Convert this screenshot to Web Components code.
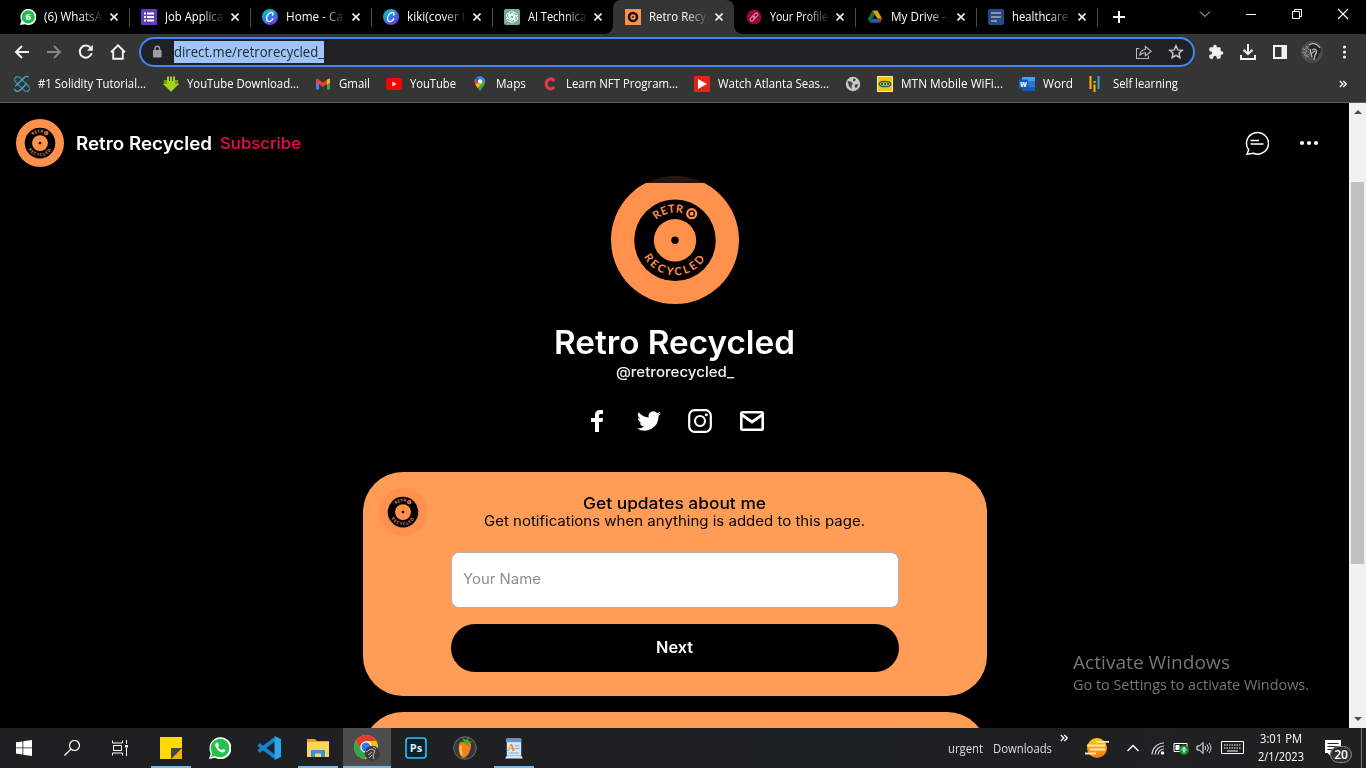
<!DOCTYPE html>
<html lang="en">
<head>
<meta charset="utf-8">
<title>Retro Recycled</title>
<style>
html,body{margin:0;height:100%;overflow:hidden;background:#000}
body{font-family:"Open Sans","Noto Sans",sans-serif;font-size:12px;color:#fff}
</style>
</head>
<body>
<desktop-screen></desktop-screen>
<script>
const ICONS = {
  back:['0 0 16 16','<path d="M15 8H2M8 2L2 8l6 6" fill="none" stroke="#f1f1f1" stroke-width="2"/>'],
  forward:['0 0 16 16','<path d="M1 8h13M8 2l6 6-6 6" fill="none" stroke="#858585" stroke-width="1.8"/>'],
  reload:['0 0 16 16','<path d="M13.6 9.2A6 6 0 1 1 12.6 4" fill="none" stroke="#f1f1f1" stroke-width="2"/><path d="M14.8.8v6H8.9z" fill="#f1f1f1"/>'],
  home:['0 0 16 16','<path d="M1 8.2L8 1.3l7 6.9M3.2 7v7.7h9.6V7" fill="none" stroke="#f1f1f1" stroke-width="1.9"/>'],
  lock:['0 0 12 14','<rect x="2" y="5" width="8.6" height="7.6" rx="1" fill="#9aa0a6"/><path d="M4 5V3.6a2.3 2.3 0 0 1 4.6 0V5" fill="none" stroke="#9aa0a6" stroke-width="1.4"/>'],
  share:['0 0 16 16','<path d="M3.500 4.500h-3v10h12v-3" fill="none" stroke="#b5b7ba" stroke-width="1.1"/><path d="M3.700 11.500c.4-3.800 2.100-5.700 5.700-6V2.500l5.800 4.700-5.800 4.600V8.700c-2.500 0-4.200.6-5.700 2.800z" fill="none" stroke="#b5b7ba" stroke-width="1.100"/>'],
  star:['0 0 16 16','<path d="M8 1.800l1.800 4.100 4.500.4-3.400 3 1 4.400L8 11.400l-3.900 2.300 1-4.400-3.400-3 4.500-.4z" fill="none" stroke="#c5c7ca" stroke-width="1.500"/>'],
  puzzle:['0 0 24 24','<path fill="#f1f1f1" d="M20.500 11H19V7a2 2 0 0 0-2-2h-4V3.500a2.500 2.500 0 0 0-5 0V5H4a2 2 0 0 0-2 2v3.800h1.500a2.700 2.700 0 0 1 0 5.400H2V20c0 1.100.9 2 2 2h3.800v-1.500a2.700 2.700 0 0 1 5.400 0V22H17a2 2 0 0 0 2-2v-4h1.500a2.500 2.500 0 0 0 0-5z"/>'],
  download:['0 0 16 16','<path d="M8 0v10M3.500 5.700L8 10.200l4.500-4.500M1 11v4h14v-4" fill="none" stroke="#f1f1f1" stroke-width="2"/>'],
  panel:['0 0 16 16','<path d="M2 2h12v12H2z" fill="none" stroke="#f1f1f1" stroke-width="2"/><path d="M9.500 2H14v12H9.500z" fill="#f1f1f1"/>'],
  user:['0 0 22 22','<circle cx="11" cy="11" r="11" fill="#4b4b4b"/><path d="M1 7l5 3-3 5M3 13l5 3M2 10l6-5M4 17l6-6M1 12l4-1M5 5l3 4" stroke="#8f8f8f" fill="none"/><path d="M8 6c3-5 10-5 12 2 0 5-3 5-4 9l-3 3c-1-5-4-7-5-14z" fill="#252525"/><path d="M8 4c4-3 9-1 11 3M11 9c4-3 6 2 3 5l-1 5M11 12l3-2M9 8l2 8" fill="none" stroke="#b8b8b8" stroke-width="1.300"/>'],
  kebab:['0 0 16 16','<g fill="#f1f1f1"><circle cx="8.500" cy="3" r="1.600"/><circle cx="8.500" cy="8" r="1.600"/><circle cx="8.500" cy="13" r="1.600"/></g>'],
  close:['0 0 8 8','<path d="M.5.5l7 7M7.500.5l-7 7" stroke="#f1f1f1" stroke-width="1.600"/>'],
  plus:['0 0 12 12','<path d="M6 0v12M0 6h12" stroke="#fff" stroke-width="2"/>'],
  wchev:['0 0 12 12','<path d="M1 3.500l5 5 5-5" fill="none" stroke="#ddd"/>'],
  wmin:['0 0 12 12','<path d="M1 6.500h10" stroke="#fff"/>'],
  wmax:['0 0 12 12','<path d="M1.500 3.500h7v7h-7zM3.500 3V1.500h7v7H9" fill="none" stroke="#fff"/>'],
  wclose:['0 0 12 12','<path d="M1 1l10 10M11 1L1 11" stroke="#fff" stroke-width="1.100"/>'],
  wa6:['0 0 16 16','<path d="M0 16l1.400-4.200A8 8 0 1 1 5 15.200z" fill="#fff"/><circle cx="8.200" cy="7.900" r="6.600" fill="#1fbf4b"/><text x="8.200" y="11.400" font-family="Open Sans" font-weight="700" font-size="9.500" fill="#fff" text-anchor="middle">6</text>'],
  forms:['0 0 16 16','<rect width="16" height="16" rx="1" fill="#673ab7"/><path d="M3 4.500h2M3 8h2M3 11.500h2M6 4.500h7M6 8h7M6 11.500h7" stroke="#fff" stroke-width="1.800"/>'],
  canva:['0 0 16 16','<defs><linearGradient id="a" x1=".2" y1="0" x2=".75" y2="1"><stop offset="0" stop-color="#09c2cf"/><stop offset=".5" stop-color="#2f7fe0"/><stop offset="1" stop-color="#7d2ae8"/></linearGradient></defs><circle cx="8" cy="8" r="8" fill="url(#a)"/><path d="M10.200 6.500c1.300-1 1.200-3.300-.6-3.200C6.500 3.600 4.200 7.200 4.600 10.200c.5 3.500 4.600 3.200 6.500-.8" fill="none" stroke="#fff" stroke-width="1.300"/>'],
  gpt:['0 0 16 16','<rect width="16" height="16" rx="2" fill="#74aa9c"/><g fill="none" stroke="#fff" stroke-width=".85"><path id="p" d="M5.300 9.300V4.600a2.500 2.500 0 0 1 4.600-1.300L6.400 5.500v3.600"/><use href="#p" transform="rotate(60 8 8)"/><use href="#p" transform="rotate(120 8 8)"/><use href="#p" transform="rotate(180 8 8)"/><use href="#p" transform="rotate(240 8 8)"/><use href="#p" transform="rotate(300 8 8)"/></g>'],
  retro:['0 0 16 16','<path fill="#ff914d" d="M0 0h16v16H0z"/><circle cx="8" cy="8" r="4" fill="none" stroke="#15100d" stroke-width="2.600"/><circle cx="8" cy="8" r=".9" fill="#15100d"/>'],
  link:['0 0 16 16','<circle cx="8" cy="8" r="7.300" fill="#a10537"/><g fill="none" stroke="#cf95a8" stroke-width="1" transform="rotate(-45 8 8)"><rect x="3" y="6.400" width="5.800" height="3.200" rx="1.600"/><rect x="7.200" y="6.400" width="5.800" height="3.200" rx="1.600"/></g>'],
  drive:['0 0 16 16','<path fill="#11733a" d="M5.500 1.500L.8 9.700l2.300 4L8 5.500z"/><path fill="#d7a210" d="M5.500 1.500h5l4.700 8.200h-4.800z"/><path fill="#2858b8" d="M5.400 9.700h9.800l-2.400 4H3.100z"/><path fill="#a5322b" d="M10.500 9.700h4.700l-2.400 4z"/>'],
  docs:['0 0 16 16','<rect width="16" height="16" rx="2" fill="#25498d"/><path d="M3 4h10M3 8h10M3 12h6" stroke="#8994a8" stroke-width="1.800"/>'],
  solidity:['0 0 16 16','<g fill="none" stroke-width="1.300"><rect x="-1.300" y="5" width="18.600" height="6" rx="3" transform="rotate(45 8 8)" stroke="#2790a5"/><rect x="-1.300" y="5" width="18.600" height="6" rx="3" transform="rotate(-45 8 8)" stroke="#54a9b8" stroke-dasharray="17 7"/></g>'],
  ytd:['0 0 16 16','<path d="M1 4h3v5H.5zM12 4h3l.5 5H12z" fill="#6da012"/><path d="M4 .5h2v5H4zM7 .5h2v5H7zM10 .5h2v5h-2zM4 5h8v3h4l-8 7.700L0 8h4z" fill="#a3d81a"/>'],
  gmail:['0 0 16 16','<path fill="#4285f4" d="M1 4v9.500h3V7z"/><path fill="#34a853" d="M12 7v6.500h3V4z"/><path fill="#fbbc04" d="M12 3.500l3-1V6l-3 3z"/><path fill="#ea4335" d="M1 3l1.500-.5L8 6.700l4-3V8L8 11 1 6z"/>'],
  yt:['0 0 16 16','<rect y="2" width="16" height="12" rx="3" fill="#f00"/><path d="M6.400 5.600l4 2.400-4 2.400z" fill="#fff"/>'],
  maps:['0 0 16 16','<path fill="#34a853" d="M8 16C7 12 2.700 9.700 2.700 5.500L13.300 5C13.500 10 9 12 8 16z"/><path fill="#fbbc04" d="M3.300 8.300L9.500 2l2 4-6 6z"/><path fill="#ea4335" d="M3 3l5 3-4.800 2.500A5.600 5.600 0 0 1 3 3z"/><path fill="#4285f4" d="M4 2.200a5.300 5.300 0 0 1 9.200 2.400L7 8z"/><path fill="#1a73e8" d="M3.300 3L5 1l3 3-2.500 2z"/><circle cx="8" cy="5.300" r="2" fill="#fff"/>'],
  cc:['0 0 16 16','<path d="M12.300 5.100C9.500.5 3.700 4 4.200 8.600c.4 4.400 5.300 5.700 8.100 2.400" fill="none" stroke="#e03a3e" stroke-width="3"/>'],
  play:['0 0 16 16','<rect width="16" height="16" rx="1.500" fill="#e62219"/><path d="M4 3l9 5-9 5z" fill="#fff"/>'],
  globe:['0 0 16 16','<circle cx="8" cy="8" r="7.200" fill="#c7cace"/><path d="M2.500 5l3.500.5 2 2-1.500 2.500.5 3-3-2.500zM8 2.500l3 .5-1 2-2 .5zM10 8.500l3.500-.5-2 4-2-1z" fill="#47494c"/>'],
  mtn:['0 0 16 16','<path fill="#ffc400" stroke="#fff0a6" d="M.5.5h15v15H.5z"/><ellipse cx="8" cy="8" rx="5.800" ry="2.600" fill="none" stroke="#10697e" stroke-width="1.500"/><path d="M4 8h2M7 8h2M10 8h2" stroke="#126a81" stroke-width="1.800"/>'],
  word:['0 0 16 16','<path fill="#2b78d3" d="M3 1h13v14H3z"/><path fill="#41a5ee" d="M3 1h13v4H3z"/><path fill="#185abd" d="M3 11h13v4H3zM0 3.500h9v9H0z"/><text x="4.500" y="11" text-anchor="middle" font-family="Open Sans" font-weight="700" font-size="8" fill="#fff">w</text>'],
  self:['0 0 16 16','<path d="M1.500 0v13" stroke="#ffb400" stroke-width="2"/><path d="M5.500 5v2M5.500 8.500V16" stroke="#ffb400" stroke-width="2"/><path d="M9.500 0v13" stroke="#36a4dc" stroke-width="2"/>'],
  chat:['0 0 24 24','<path d="M2 23.200l1.700-4.400A11 10.800 0 1 1 8.300 22.300z" fill="none" stroke="#fff" stroke-width="1.500"/><path d="M5.500 9.500H14M5.500 13H18.500" stroke="#fff" stroke-width="1.500"/>'],
  dots:['0 0 24 24','<g fill="#fff"><circle cx="5" cy="12" r="2.100"/><circle cx="12" cy="12" r="2.100"/><circle cx="19" cy="12" r="2.100"/></g>'],
  facebook:['0 0 24 24','<path fill="#fff" d="M10 23V13H6V9h4V6c0-3.400 2-5 4.700-5H18v4h-2.300C14.400 5 14 5.600 14 6.700V9h4l-.5 4H14v10z"/>'],
  twitter:['0 0 24 24','<path fill="#fff" d="M23.900 4.600a10 10 0 0 1-2.800.8 5 5 0 0 0 2.200-2.700 10 10 0 0 1-3.200 1.200 4.900 4.900 0 0 0-8.400 4.500A14 14 0 0 1 1.700 3.200a4.900 4.900 0 0 0 1.500 6.500 5 5 0 0 1-2.200-.6v.1c0 2.300 1.600 4.300 3.900 4.800a5 5 0 0 1-2.200.1 4.900 4.900 0 0 0 4.600 3.400A9.900 9.900 0 0 1 0 19.500a14 14 0 0 0 21.500-12.400 10 10 0 0 0 2.400-2.500z"/>'],
  instagram:['0 0 24 24','<rect x="1.200" y="1.200" width="21.600" height="21.600" rx="5.500" fill="none" stroke="#fff" stroke-width="2.200"/><circle cx="12" cy="12" r="5" fill="none" stroke="#fff" stroke-width="2.200"/><circle cx="18.300" cy="5.700" r="1.500" fill="#fff"/>'],
  mail:['0 0 24 24','<rect x="1.300" y="3.300" width="21.400" height="17.400" rx="1" fill="none" stroke="#fff" stroke-width="2.600"/><path d="M2 6l10 7 10-7" fill="none" stroke="#fff" stroke-width="2.800"/>'],
  win:['0 0 16 16','<path fill="#fff" d="M0 2.300l6.500-.9v6.100H0zM7.300 1.300L16 0v7.500H7.300zM0 8.300h6.500v6.200L0 13.600zM7.300 8.300H16V16l-8.700-1.300z"/>'],
  search:['0 0 16 16','<circle cx="10.500" cy="5.500" r="5" fill="none" stroke="#fff" stroke-width="1.200"/><path d="M7 9L.5 15.500" stroke="#fff" stroke-width="1.300"/>'],
  task:['0 0 16 16','<path d="M.5.5V3h10V.5M.5 15.500V13h10v2.500M1.500 5.500h8v5h-8zM14.500 0v4M14.500 8v8" fill="none" stroke="#fff"/><path fill="#fff" d="M13 5h3v2.500h-3z"/>'],
  sticky:['0 0 22 22','<path fill="#ffd800" d="M0 0h22v11L11 22H0z"/><path fill="#f4b400" d="M11 22h11V11z"/><path fill="#444" d="M11 11h11L11 22z"/>'],
  whatsapp:['0 0 22 22','<path d="M0 22l1.700-5.800A11 11 0 1 1 6 20.700z" fill="#fff"/><path d="M2 20l1.200-4A9.300 9.300 0 1 1 6.300 19z" fill="#25c24b"/><path d="M7.500 5.500c-2 1.200-1.600 4 .8 6.700 2.800 3.200 6.100 4.300 7.700 2.100.4-.7.300-1.100 0-1.300l-2-1.100c-.5-.2-.9.9-1.500 1.200-1-.1-3.200-2-3.500-3.200.5-.6 1.200-1 .9-1.600L9 5.900c-.3-.6-1-.6-1.500-.4z" fill="#fff"/>'],
  vscode:['0 0 24 24','<path d="M1.500 8.500L18 21M1.500 15.500L18 3" stroke="#1684d1" stroke-width="3.600"/><path fill="#28a6f2" d="M17.500 0L24 3v18l-6.500 3z"/>'],
  folder:['0 0 22 20','<path fill="#e9a500" d="M0 1h8l2 2h12v5H0z"/><path fill="#ffd45c" d="M0 4h22v15H0z"/><path fill="#3b93d7" d="M4 12h14v7h-4v-3.500H8V19H4z"/>'],
  chrome:['0 0 26 26','<circle cx="12" cy="12" r="12" fill="#fbc116"/><path fill="#e33b2e" d="M1.600 6A12 12 0 0 1 22.400 6H12L7 15z"/><path fill="#2da94f" d="M1.600 6l5.500 9 5 3L11 24A12 12 0 0 1 1.600 6z"/><circle cx="12" cy="12" r="5.700" fill="#fff"/><circle cx="12" cy="12" r="4.500" fill="#3479e8"/><circle cx="18.300" cy="18.300" r="7.600" fill="#3b3b3b"/><path d="M12 17l5-3 4 2-2 4 1 4M14 20l4-3M22 14l-3-2M15 23l3-3" fill="none" stroke="#b9b9b9"/>'],
  ps:['0 0 22 22','<rect x="1" y="1" width="20" height="20" rx="3" fill="#06202d" stroke="#29c5f6" stroke-width="1.600"/><text x="11" y="15" text-anchor="middle" font-family="Open Sans" font-weight="700" font-size="11" fill="#d8f4ff">Ps</text>'],
  fl:['0 0 24 24','<circle cx="12" cy="12" r="11.300" fill="#35383b" stroke="#6a6e70"/><path d="M6 8c2-3 9-3 12 0 0 5-2 13-8 14C6 20 5 13 6 8z" fill="#f68119"/><path d="M8 10c-1 4 0 7 1 9" stroke="#ffc15b" stroke-width="2" fill="none"/><path d="M12 8L6 6l5-.5L9 2l4 2 3-3-1 4 5 1-5 1 2 4z" fill="#54a827"/>'],
  wordpad:['0 0 20 22','<path fill="#d5e9f7" d="M2 0h16v19l2 3H0l2-3z"/><path fill="#6596c7" d="M1 0h17v4H1z"/><text x="7" y="14" text-anchor="middle" font-family="Liberation Serif" font-weight="700" font-size="12" fill="#ef8425">A</text><path d="M11 8h5M11 11h5M4 16h12" stroke="#7ea5cf"/><path d="M2 19h16" stroke="#9fb2c0"/>'],
  weather:['0 0 24 22','<defs><linearGradient id="w" x1="0" y1="0" x2="0" y2="1"><stop stop-color="#ffcb10"/><stop offset="1" stop-color="#f47a12"/></linearGradient></defs><circle cx="12" cy="11" r="10" fill="url(#w)"/><path d="M11 4.800h13M2 8.500h18M5 12.500h15M0 16.500h11" stroke="#ffe2ad" stroke-width="1.800"/>'],
  up:['0 0 14 14','<path d="M1.500 10L7 4.500l5.500 5.500" fill="none" stroke="#fff" stroke-width="1.300"/>'],
  wifi:['0 0 14 14','<g fill="none" stroke="#ddd" stroke-width="1.200"><path d="M1 13.500A12 12 0 0 1 13 2M4 13.500A9 9 0 0 1 13 5M7 13.500A6 6 0 0 1 13 8"/></g><circle cx="11.500" cy="12" r="1.700" fill="#fff"/>'],
  battery:['0 0 16 14','<path d="M1 2.500h13v8H1z" fill="none" stroke="#fff"/><path fill="#fff" d="M2.500 4h4v5h-4z"/><circle cx="11" cy="9" r="4.800" fill="#149633"/><path d="M11 6v6M9 8.500l2-2 2 2-2 2z" stroke="#fff" fill="none"/>'],
  sound:['0 0 17 14','<path d="M1 5h2.500L7 1.500v11L3.500 9H1z" fill="none" stroke="#fff"/><path d="M9 5q1.500 2 0 4M11 3.500q3 3.500 0 7M13 2q4 5 0 10" fill="none" stroke="#ddd"/>'],
  keyboard:['0 0 23 14','<path d="M.5.500h22v12H.5z" fill="none" stroke="#fff"/><path d="M3 4h17M3 7h17" stroke="#fff" stroke-width="1.200" stroke-dasharray="1.500 1"/><path d="M6 10h11" stroke="#fff"/>'],
  note:['0 0 16 16','<path fill="#fff" d="M0 0h16v13H5.500V16l-3-3H0z"/><path d="M2.500 3.500h11M2.500 6.500h11M2.500 9.500h8" stroke="#222"/>'],
  more:['0 0 8 8','<path d="M.8 1l3 3-3 3M4.300 1l3 3-3 3" fill="none" stroke="#fff" stroke-width="1.300"/>']
};
const component = (tag, render) => customElements.define(tag, class extends HTMLElement {
  connectedCallback() {
    if (this.shadowRoot) return;
    this.attachShadow({mode:'open'}).innerHTML = render(this);
  }
});
const icon = (name, w=16, h=w) => `<ui-icon name="${name}" w="${w}" h="${h}"></ui-icon>`;
const text = (s, w) => `<fit-text w="${w}">${s}</fit-text>`;

component('desktop-screen', () => `<style>
:host{display:flex;flex-direction:column;width:1366px;height:768px;overflow:hidden;background:#000;position:relative}
profile-page{flex:1;min-height:0}
</style><browser-tabs></browser-tabs><browser-toolbar></browser-toolbar><bookmark-bar></bookmark-bar><profile-page></profile-page><task-bar></task-bar><activation-note></activation-note>`);

component('browser-tabs', () => `<style>
:host{display:flex;height:34px;box-sizing:border-box;padding-left:8px;background:#000}
.new{width:44px;display:grid;place-items:center}
.controls{margin-left:auto;display:grid;grid-template-columns:repeat(4,46px);height:28px;place-items:center}
</style>
${[['wa6','(6) WhatsA',58],['forms','Job Applica',58],['canva','Home - Ca',57],['canva','kiki(cover t',59],['gpt','AI Technica',58],['retro','Retro Recy',57],['link','Your Profile',58],['drive','My Drive -',55],['docs','healthcare',56]]
 .map(([i,t,w],n)=>`<browser-tab icon="${i}" w="${w}" ${n==5?'active':''} ${n==4||n==5?'plain':''}>${t}</browser-tab>`).join('')}
<div class="new">${icon('plus',12)}</div><div class="controls">${['wchev','wmin','wmax','wclose'].map(i=>icon(i,12)).join('')}</div>`);

component('browser-tab', el => `<style>
:host{display:flex;align-items:center;width:121px;height:34px;box-sizing:border-box;padding-left:12px;position:relative}
:host([active]){background:#353535;border-radius:8px 8px 0 0}
:host([active])::before,:host([active])::after{content:"";position:absolute;bottom:0;width:8px;height:8px}
:host([active])::before{left:-8px;background:radial-gradient(circle at 0 0,transparent 7.5px,#353535 8px)}
:host([active])::after{right:-8px;background:radial-gradient(circle at 100% 0,transparent 7.5px,#353535 8px)}
:host(:not([plain]))::after{content:"";position:absolute;left:121px;top:8px;width:1px;height:19px;background:#4a4a4a}
.name{margin:0 8px 0 8px;width:58px;overflow:hidden;line-height:20px;-webkit-mask:linear-gradient(90deg,#000 62%,transparent 104%);mask:linear-gradient(90deg,#000 62%,transparent 104%)}
</style>${icon(el.getAttribute('icon'))}<div class="name">${text(el.textContent,el.getAttribute('w'))}</div>${icon('close',8)}`);

component('browser-toolbar', () => `<style>
:host{display:flex;align-items:center;height:36px;background:#353535;padding-left:14px;gap:16px;box-sizing:border-box}
.box{display:flex;align-items:center;box-sizing:border-box;width:1056px;height:30px;margin:0 -3px;border:2px solid #4285f4;border-radius:15px;background:#202124;padding:0 9px 0 10px}
.url{margin-left:11px;background:#9fc5f8;height:22px;line-height:21px;color:#25282c;font-size:14px}
.end{margin-left:auto;display:flex;gap:16px}
.user{margin:0 -3px}
</style>${icon('back')}${icon('forward')}${icon('reload')}${icon('home')}
<div class="box">${icon('lock',12,14)}<div class="url">${text('direct.me/retrorecycled_',150)}</div><div class="end">${icon('share')}${icon('star')}</div></div>
${icon('puzzle')}${icon('download')}${icon('panel')}<span class="user">${icon('user',22)}</span>${icon('kebab')}`);

component('bookmark-bar', () => `<style>
:host{display:flex;align-items:center;gap:16px;height:33px;padding:0 19px 5px 14px;box-sizing:border-box;background:#353535;border-bottom:1px solid #5c5c5c}
div{display:flex;gap:8px;align-items:center;height:20px}
.more{margin-left:auto}
</style>${[['solidity','#1 Solidity Tutorial...',108],['ytd','YouTube Download...',112],['gmail','Gmail',31],['yt','YouTube',46],['maps','Maps',30],['cc','Learn NFT Program...',112],['play','Watch Atlanta Seas...',111],['globe'],['mtn','MTN Mobile WiFi...',102],['word','Word',30],['self','Self learning',65]].map(([i,t,w],n)=>`<div ${n?'':'style="width:133px"'}>${icon(i)}${t?text(t,w):''}</div>`).join('')}<div class="more">${icon('more',8)}</div>`);

component('profile-page', () => `<style>
:host{display:flex;background:#000;overflow:hidden;font-family:Inter,sans-serif}
.page{width:1349px;display:flex;flex-direction:column;align-items:center}
header{align-self:stretch;flex:none;height:80px;box-sizing:border-box;padding:0 28px 0 16px;display:flex;align-items:center;background:rgba(0,0,0,.85);position:relative;z-index:1}
.name{font-size:18px;font-weight:600;margin:0 8px 0 12px}
.sub{font-size:16px;font-weight:500;color:#f4074e}
.actions{margin-left:auto;display:flex;gap:28px}
.avatar{margin-top:-7px;flex:none}
h1{font-size:32px;font-weight:600;line-height:40px;margin:19px 0 0;height:40px;flex:none}
.handle{font-size:14px;font-weight:500;line-height:18px;color:#eee;flex:none}
.social{display:flex;gap:27.700px;margin:28px 0 39px;flex:none}
.next-card{flex:none;width:624px;height:224px;border-radius:40px;background:#ff9d57;margin-top:16px}
.scroll{width:17px;background:#f1f1f1;display:flex;flex-direction:column;align-items:center}
i{width:0;height:0;border:4px solid transparent}
.up{border-bottom-color:#505050;border-top:0;margin:7px 0 68px}
.thumb{width:13px;height:382px;background:#c1c1c1}
.down{border-top-color:#505050;border-bottom:0;margin:auto 0 7px}
</style>
<div class="page"><header><record-logo size="48"></record-logo><div class="name">${text('Retro Recycled',136)}</div><div class="sub">${text('Subscribe',81)}</div><div class="actions">${icon('chat',24)}${icon('dots',24)}</div></header>
<record-logo class="avatar" size="128"></record-logo>
<h1>${text('Retro Recycled',241)}</h1><div class="handle">${text('@retrorecycled_',118)}</div>
<div class="social">${['facebook','twitter','instagram','mail'].map(i=>icon(i,24)).join('')}</div>
<updates-card></updates-card><div class="next-card"></div></div>
<div class="scroll"><i class="up"></i><div class="thumb"></div><i class="down"></i></div>`);

component('record-logo', el => `<style>
:host{display:block;width:${el.getAttribute('size')}px;height:${el.getAttribute('size')}px}svg{display:block;width:100%;height:100%}
text{font-family:Lato,sans-serif;font-weight:700;font-size:11px;fill:#ff914d}
</style><svg viewBox="0 0 128 128"><circle cx="64" cy="64" r="64" fill="#ff914d"/><circle cx="64" cy="64.300" r="40.800" fill="#000"/><circle cx="64" cy="64.300" r="21.200" fill="#ff914d"/><circle cx="64" cy="64.300" r="3.700" fill="#000"/>
<path id="t" d="M45.200 43.800A27.800 27.800 0 0 1 91.800 64.300" fill="none"/><path id="b" d="M33 80.600A35 35 0 0 0 95 80.600" fill="none"/>
<text textLength="28"><textPath href="#t" textLength="28">RETR</textPath></text><text textLength="73.500"><textPath href="#b" textLength="73.500">RECYCLED</textPath></text>
<circle cx="80.700" cy="37.700" r="5.600" fill="#ff914d"/><circle cx="80.700" cy="37.700" r="2.700" fill="none" stroke="#1a0e07" stroke-width="1.400"/></svg>`);

component('updates-card', () => `<style>
:host{display:grid;grid-template-columns:48px 448px 48px;column-gap:24px;box-sizing:border-box;width:624px;height:224px;flex:none;border-radius:40px;background:#ff9d57;padding:16px;color:#000}
.form{display:flex;flex-direction:column;align-items:center;padding-top:6px}
.title{font-size:16px;font-weight:500;line-height:18px}
.note{font-size:14px;line-height:18px}
.field{box-sizing:border-box;width:448px;height:56px;border:1px solid #a8b3bd;border-radius:8px;background:#fff;color:#8d8d8d;font-size:14px;line-height:52px;padding-left:11px;margin:22px 0 16px}
.button{width:448px;height:48px;border-radius:24px;background:#000;color:#fff;font-size:16px;font-weight:600;line-height:47px;display:flex;justify-content:center}
</style><record-logo size="48"></record-logo><div class="form"><div class="title">${text('Get updates about me',183)}</div><div class="note">${text('Get notifications when anything is added to this page.',381)}</div><div class="field">${text('Your Name',78)}</div><div class="button">${text('Next',37)}</div></div>`);

component('task-bar', () => `<style>
:host{display:flex;height:40px;background:linear-gradient(90deg,#202022,#1f2022 35%,#1c2125 60%,#202020)}
.cell{width:48px;height:40px;display:grid;place-items:center;position:relative}
.apps{display:flex;gap:1px;margin-left:3px}
.open::after{content:"";position:absolute;bottom:0;left:4px;right:4px;height:2px;background:#76b9ed}
.current{background:#4d4d4e}.current::after{left:0;right:0}
.tray{margin-left:auto;display:flex;align-items:center;width:418px}
.label{color:#ddd;display:flex;gap:10px}
.more{align-self:flex-start;margin:6px 17px 0 8px}
.clock{width:48px;margin-left:13px;display:flex;flex-direction:column;align-items:center;line-height:18px}
.alerts{position:relative;width:16px;height:16px;margin:-1px 0 0 20px}
.badge{position:absolute;left:5px;top:6px;width:20px;height:15px;border:1px solid #888;border-radius:9px;background:#303030;font-size:12px;font-weight:600;line-height:15px;text-align:center}
.edge{margin-left:20px;width:1px;height:40px;background:#777}
</style>
${['win','search','task'].map(i=>`<div class="cell">${icon(i,16)}</div>`).join('')}
<div class="apps">${[['sticky',22,22,'open'],['whatsapp',22],['vscode',24],['folder',22,20,'open'],['chrome',26,26,'open current'],['ps',22],['fl',24],['wordpad',18,21,'open']].map(([i,w,h=w,c=''])=>`<div class="cell ${c}">${icon(i,w,h)}</div>`).join('')}</div>
<div class="tray"><div class="label">${text('urgent',35)}${text('Downloads',59)}</div><span class="more">${icon('more',8)}</span>${icon('weather',24,22)}<span style="width:17px"></span>${icon('up',14)}<span style="width:11px"></span>${icon('wifi',14)}<span style="width:8px"></span>${icon('battery',16,14)}<span style="width:7px"></span>${icon('sound',17,14)}<span style="width:8px"></span>${icon('keyboard',23,14)}
<div class="clock">${text('3:01 PM',42)}${text('2/1/2023',46)}</div><div class="alerts">${icon('note',16)}<div class="badge">20</div></div><div class="edge"></div></div>`);

component('activation-note', () => `<style>
:host{position:absolute;left:1073px;top:649px;color:#767676}.a{font-size:19px;line-height:26px}.b{font-size:14.500px;line-height:20px}
</style><div class="a">${text('Activate Windows',157)}</div><div class="b">${text('Go to Settings to activate Windows.',236)}</div>`);

component('ui-icon', el => { const [box,art]=ICONS[el.getAttribute('name')]; const w=el.getAttribute('w'),h=el.getAttribute('h');
 return `<style>:host{display:block;flex:none;width:${w}px;height:${h}px}svg{display:block}</style><svg width="${w}" height="${h}" viewBox="${box}">${art}</svg>`; });

/* Sets a line of text to a given width by widening or narrowing its glyphs. */
customElements.define('fit-text', class extends HTMLElement {
  connectedCallback() {
    if (this.shadowRoot) return;
    const w = +this.getAttribute('w');
    this.attachShadow({mode:'open'}).innerHTML = `<style>:host{display:block;flex:none;width:${w}px;white-space:nowrap}span{display:inline-block;transform-origin:0 50%}</style><span><slot></slot></span>`;
    const span = this.shadowRoot.querySelector('span');
    span.style.transform = `scaleX(${w / span.getBoundingClientRect().width})`;
  }
});
</script>
</body>
</html>
